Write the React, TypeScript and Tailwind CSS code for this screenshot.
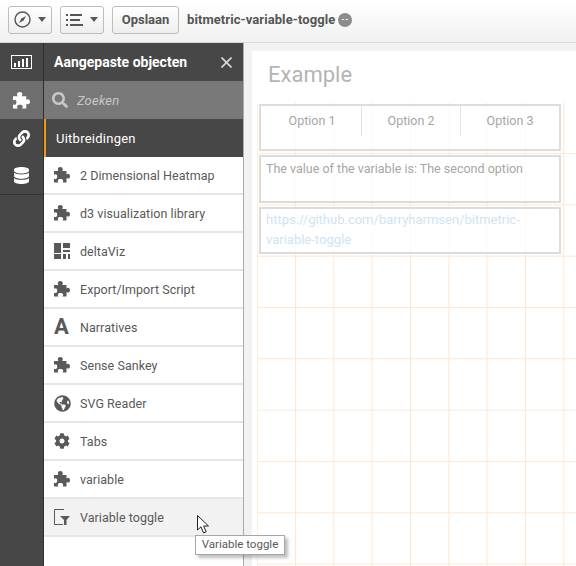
import { FaLink, FaDatabase, FaGlobeAmericas, FaCog, FaSearch } from "react-icons/fa";

const font = { fontFamily: "Roboto, 'Liberation Sans', sans-serif" };

function Caret() {
  return <span className="ml-[7px] h-0 w-0 border-x-[4px] border-t-[5px] border-x-transparent border-t-[#595959]" />;
}

function Button({ children, wide }: { children: React.ReactNode; wide?: boolean }) {
  return (
    <div className={`flex h-[28px] items-center justify-center rounded-[3px] border border-[#bdbdbd] bg-gradient-to-b from-white to-[#eeeeee] text-[13px] font-bold text-[#555] ${wide ? "w-[67px]" : "w-[44px]"}`}>
      {children}
    </div>
  );
}

function Compass() {
  return (
    <svg width="17" height="17" viewBox="0 0 17 17" fill="none">
      <circle cx="8.5" cy="8.5" r="7.5" stroke="#555" strokeWidth="1.4" />
      <path d="M12 5 L9.6 9.6 L5 12 L7.4 7.4 Z" fill="#555" />
    </svg>
  );
}

function ListIcon() {
  return (
    <svg width="17" height="12" viewBox="0 0 17 12" fill="#555">
      <rect x="0" y="0" width="2" height="2" />
      <rect x="4" y="0" width="12" height="2" />
      <rect x="0" y="5" width="2" height="2" />
      <rect x="4" y="5" width="10" height="2" />
      <rect x="0" y="10" width="2" height="2" />
      <rect x="4" y="10" width="13" height="2" />
    </svg>
  );
}

function ChartIcon() {
  return (
    <svg width="21" height="14" viewBox="0 0 21 14" fill="none">
      <rect x="0.5" y="0.5" width="20" height="13" stroke="#fff" />
      <rect x="3" y="8" width="2" height="4" fill="#fff" />
      <rect x="7" y="6" width="2" height="6" fill="#fff" />
      <rect x="11" y="4" width="2" height="8" fill="#fff" />
      <rect x="15" y="3" width="2" height="9" fill="#fff" />
    </svg>
  );
}

function Puzzle({ color = "#595959", size = 16 }: { color?: string; size?: number }) {
  return (
    <svg width={size} height={size} viewBox="0 0 16 16" fill={color}>
      <path d="M0 4 H4.5 C4 3.5 3.8 3 3.8 2.2 C3.8 0.8 5 0 6.3 0 C7.6 0 8.8 0.8 8.8 2.2 C8.8 3 8.6 3.5 8 4 H12.5 V7.5 C13 7 13.5 6.8 14 6.8 C15.2 6.8 16 8 16 9.2 C16 10.4 15.2 11.6 14 11.6 C13.5 11.6 13 11.4 12.5 11 V15.5 H8.5 C9 15 9.2 14.5 9.2 13.8 C9.2 12.6 8 12 6.5 12 C5 12 3.8 12.6 3.8 13.8 C3.8 14.5 4 15 4.5 15.5 H0 V11.5 C0.5 12 1.2 12.2 2 12 C3 11.7 3.2 10.5 3.2 9.5 C3.2 8.5 2.8 7.5 1.8 7.3 C1.2 7.2 0.5 7.5 0 8 Z" />
    </svg>
  );
}

function DeltaIcon() {
  return (
    <svg width="16" height="16" viewBox="0 0 16 16" fill="#595959">
      <rect x="0" y="0" width="7" height="10" />
      <rect x="9" y="0" width="7" height="5" />
      <rect x="9" y="7" width="7" height="2" />
      <rect x="0" y="11" width="7" height="5" />
      <rect x="9" y="11" width="3" height="5" />
      <rect x="14" y="11" width="2" height="5" />
    </svg>
  );
}

function ToggleIcon() {
  return (
    <svg width="16" height="16" viewBox="0 0 16 16" fill="none">
      <path d="M10 0.5 H0.5 V15.5 H9" stroke="#595959" />
      <path d="M6 7 H16 L12.5 11 V16 H10 V11 Z" fill="#595959" />
    </svg>
  );
}

function Row({ icon, label, active }: { icon: React.ReactNode; label: string; active?: boolean }) {
  return (
    <div className={`flex h-[38px] items-center border-b-2 border-[#e6e6e6] pl-[10px] text-[12.5px] text-[#595959] ${active ? "bg-[#f2f2f2]" : "bg-white"}`}>
      <span className="flex w-[26px] justify-start">{icon}</span>
      <span className="pt-[2px] tracking-[0.05px]">{label}</span>
    </div>
  );
}

const puzzle = <Puzzle />;

function Cursor() {
  return (
    <svg className="absolute left-[197px] top-[515px]" width="13" height="20" viewBox="0 0 13 20">
      <path d="M0.5 0.5 V15 L4 11.8 L6.6 18 L9.2 16.8 L6.6 11 L11.5 11 Z" fill="#fff" stroke="#222" strokeWidth="1" />
    </svg>
  );
}

export default function App() {
  return (
    <div className="relative flex h-[566px] w-[576px] flex-col overflow-hidden bg-[#f2f2f2]" style={font}>
      <header className="flex h-[43px] shrink-0 items-center gap-[8px] border-b border-[#d9d9d9] bg-gradient-to-b from-white to-[#f1f1f1] pb-[3px] pl-[8px]">
        <Button>
          <Compass />
          <Caret />
        </Button>
        <Button>
          <ListIcon />
          <Caret />
        </Button>
        <Button wide>Opslaan</Button>
        <div className="flex items-center gap-[3px] text-[13px] font-bold tracking-[0.08px] text-[#555]">
          <span>bitmetric-variable-toggle</span>
          <span className="flex h-[14px] w-[14px] items-center justify-center rounded-full bg-[#8c8c8c] text-[8px] leading-none tracking-[1px] text-white">--</span>
        </div>
      </header>

      <div className="flex min-h-0 flex-1">
        <nav className="flex w-[44px] shrink-0 flex-col border-r border-[#2e2e2e] bg-[#474747] text-white">
          <div className="flex h-[38px] items-center justify-center"><ChartIcon /></div>
          <div className="flex h-[38px] items-center justify-center bg-[#6e6e6e]"><Puzzle color="#fff" size={17} /></div>
          <div className="flex h-[38px] items-center justify-center"><FaLink size={17} /></div>
          <div className="flex h-[38px] items-center justify-center border-b border-[#333]"><FaDatabase size={17} /></div>
        </nav>

        <aside className="flex w-[200px] shrink-0 flex-col border-r border-[#ababab] bg-white">
          <div className="flex h-[38px] items-center justify-between bg-[#474747] pl-[10px] pr-[11px] text-white">
            <span className="text-[14px] font-bold">Aangepaste objecten</span>
            <svg width="11" height="11" viewBox="0 0 11 11" stroke="#d9d9d9" strokeWidth="1.6">
              <path d="M0.5 0.5 L10.5 10.5 M10.5 0.5 L0.5 10.5" />
            </svg>
          </div>
          <div className="flex h-[38px] items-center gap-[9px] bg-[#787878] pl-[8px] text-[#c8c8c8]">
            <FaSearch size={16} />
            <span className="pt-[1px] text-[13px] italic tracking-[0.2px]">Zoeken</span>
          </div>
          <div className="flex h-[38px] items-center border-l-2 border-[#f0941e] bg-[#474747] pl-[10px] pt-[1px] text-[13px] tracking-[0.25px] text-white">
            Uitbreidingen
          </div>
          <Row icon={puzzle} label="2 Dimensional Heatmap" />
          <Row icon={puzzle} label="d3 visualization library" />
          <Row icon={<DeltaIcon />} label="deltaViz" />
          <Row icon={puzzle} label="Export/Import Script" />
          <Row icon={<span className="text-[22px] font-bold leading-none">A</span>} label="Narratives" />
          <Row icon={puzzle} label="Sense Sankey" />
          <Row icon={<FaGlobeAmericas size={17} color="#595959" />} label="SVG Reader" />
          <Row icon={<FaCog size={16} color="#595959" />} label="Tabs" />
          <Row icon={puzzle} label="variable" />
          <Row icon={<ToggleIcon />} label="Variable toggle" active />
        </aside>

        <main className="ml-[8px] mt-[8px] flex-1 bg-white">
          <div className="relative h-full w-full">
            <div className="absolute bottom-0 left-[5px] right-0 top-[52px] bg-[linear-gradient(to_right,#ffe6cf_1px,transparent_1px),linear-gradient(to_bottom,#ffe6cf_1px,transparent_1px)] bg-[size:38.33px_51.33px] bg-[position:38px_50px]" />
            <div className="relative flex flex-col">
              <h1 className="pl-[16px] pt-[10px] text-[22px] leading-[28px] text-[#b4b4b4]">Example</h1>
              <div className="ml-[7px] mt-[15px] w-[302px]">
                <div className="flex h-[47px] border-[2px] border-[#dcdcdc] bg-white/80 text-[12.5px] text-[#a6a6a6]">
                  <div className="flex h-[30px] flex-1 items-center justify-center border-r border-[#e2e2e2] pl-[2px]">Option 1</div>
                  <div className="flex h-[30px] flex-1 items-center justify-center border-r border-[#e2e2e2]">Option 2</div>
                  <div className="flex h-[30px] flex-1 items-center justify-center">Option 3</div>
                </div>
                <div className="mt-[4px] h-[48px] border-[2px] border-[#dcdcdc] bg-white/80 px-[5px] pt-[3px] text-[12.5px] leading-[18px] text-[#a6a6a6]">
                  The value of the variable is: The second option
                </div>
                <div className="mt-[4px] h-[47px] border-[2px] border-[#dcdcdc] bg-white/80 px-[5px] pt-[1px] text-[13px] leading-[20px] text-[#cfe4f2]">
                  https://github.com/barryharmsen/bitmetric-variable-toggle
                </div>
              </div>
            </div>
          </div>
        </main>
      </div>

      <Cursor />
      <div className="absolute left-[195px] top-[535px] flex h-[20px] w-[90px] items-center justify-center border border-[#a6a6a6] bg-white text-[11.5px] text-[#595959] shadow-[3px_3px_3px_rgba(0,0,0,0.25)]">
        Variable toggle
      </div>
    </div>
  );
}
